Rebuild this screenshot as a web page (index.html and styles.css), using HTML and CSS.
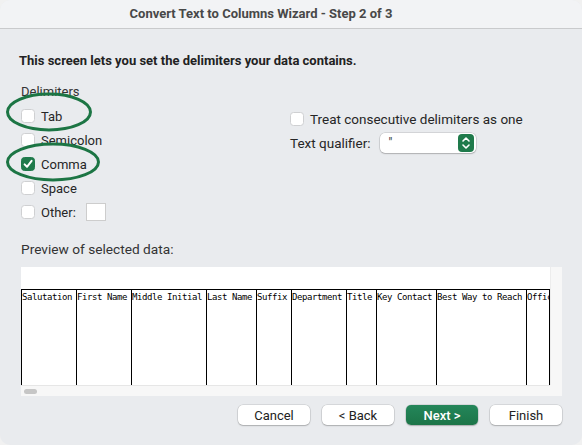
FILE: index.html
```html
<!DOCTYPE html>
<html>
<head>
<meta charset="utf-8">
<link rel="stylesheet" href="styles.css">
</head>
<body>
<div class="window">
  <div class="titlebar">Convert Text to Columns Wizard - Step 2 of 3</div>
  <div class="content">
    <div class="intro">This screen lets you set the delimiters your data contains.</div>
    <div class="options">
      <div class="delims">
        <div class="group-label">Delimiters</div>
        <div class="row"><span class="cb"></span><span>Tab</span></div>
        <div class="row"><span class="cb"></span><span>Semicolon</span></div>
        <div class="row"><span class="cb checked"><svg viewBox="0 0 14 14" width="14" height="14"><path d="M3.6 7.4 L6 9.8 L10.6 3.8" fill="none" stroke="#fff" stroke-width="2" stroke-linecap="round" stroke-linejoin="round"/></svg></span><span>Comma</span></div>
        <div class="row"><span class="cb"></span><span>Space</span></div>
        <div class="row"><span class="cb"></span><span>Other:</span><span class="other-input"></span></div>
      </div>
      <div class="right">
        <div class="row"><span class="cb"></span><span>Treat consecutive delimiters as one</span></div>
        <div class="row qual"><span>Text qualifier:</span>
          <span class="select"><span class="sel-text">"</span><span class="stepper"><svg viewBox="0 0 16 18" width="16" height="18"><path d="M5 7 L8 4 L11 7 M5 11 L8 14 L11 11" fill="none" stroke="#fff" stroke-width="1.6" stroke-linecap="round" stroke-linejoin="round"/></svg></span></span>
        </div>
      </div>
    </div>
    <div class="preview-label">Preview of selected data:</div>
    <div class="preview">
      <div class="sheet">
        <div class="cols">
          <div class="col w55">Salutation</div>
          <div class="col w55">First Name</div>
          <div class="col w75">Middle Initial</div>
          <div class="col w50">Last Name</div>
          <div class="col w35">Suffix</div>
          <div class="col w55">Department</div>
          <div class="col w30">Title</div>
          <div class="col w60">Key Contact</div>
          <div class="col w90">Best Way to Reach</div>
          <div class="col last">Office</div>
        </div>
      </div>
      <div class="vscroll"></div>
      <div class="hscroll"><span class="thumb"></span></div>
      <div class="corner"></div>
    </div>
    <div class="buttons">
      <button class="btn">Cancel</button>
      <button class="btn">&lt; Back</button>
      <button class="btn primary">Next &gt;</button>
      <button class="btn">Finish</button>
    </div>
  </div>
  <svg class="marks" width="582" height="445" viewBox="0 0 582 445">
    <ellipse cx="49" cy="112" rx="41.5" ry="18" fill="none" stroke="#1c7544" stroke-width="3"/>
    <ellipse cx="53" cy="162" rx="45.5" ry="18" fill="none" stroke="#1c7544" stroke-width="3"/>
  </svg>
</div>
</body>
</html>
```
FILE: styles.css
```css
* { box-sizing: border-box; }
html, body { margin: 0; padding: 0; }
body {
  width: 582px;
  height: 445px;
  background: #f1f1f1;
  font-family: "Roboto", "Liberation Sans", sans-serif;
  font-size: 13px;
  color: #262626;
  overflow: hidden;
}
.window {
  position: relative;
  width: 582px;
  height: 445px;
  background: #e9ebee;
  border-radius: 10px;
  overflow: hidden;
}
.titlebar {
  height: 29px;
  background: #f2f3f5;
  border-bottom: 1px solid #c9cacc;
  display: flex;
  align-items: center;
  justify-content: center;
  font-weight: 700;
  color: #484848;
  font-size: 13px;
  padding: 0 60px 1px 0;
}
.content {
  padding: 0 20px 0 21px;
  display: flex;
  flex-direction: column;
}
.intro {
  margin-top: 24px;
  line-height: 16px;
  font-weight: 700;
  color: #222;
  margin-left: -2px;
}
.options {
  display: flex;
  margin-top: 15px;
}
.delims { width: 269px; }
.group-label { line-height: 16px; color: #333; }
.row {
  display: flex;
  align-items: center;
  height: 24px;
  gap: 6px;
}
.delims .group-label + .row { margin-top: 4px; }
.cb {
  width: 14px;
  height: 14px;
  background: #fff;
  border: 1px solid #cfd0d2;
  border-radius: 3.5px;
  flex: none;
  display: inline-flex;
  align-items: center;
  justify-content: center;
}
.cb.checked {
  background: #1f7a4b;
  border-color: #1f7a4b;
}
.cb.checked svg { display: block; margin: -1px; }
.other-input {
  width: 20px;
  height: 18px;
  background: #fff;
  border: 1px solid #cdcdcd;
  margin-left: 4px;
}
.right { padding-top: 23px; font-size: 13.5px; }
.right .row { height: 24px; }
.right .row.qual { gap: 9px; }
.select {
  position: relative;
  width: 96px;
  height: 20px;
  background: #fff;
  border-radius: 5px;
  box-shadow: 0 0 0 0.5px rgba(0,0,0,0.18), 0 1px 1.5px rgba(0,0,0,0.18);
  display: flex;
  align-items: center;
  justify-content: space-between;
  padding: 0 2px 0 9px;
}
.sel-text { font-size: 12px; color: #333; }
.stepper {
  width: 16px;
  height: 18px;
  background: #1f7a4b;
  border-radius: 4px;
  display: flex;
}
.stepper svg { display: block; }
.preview-label {
  margin-top: 17px;
  line-height: 16px;
  font-size: 13.7px;
  color: #333;
}
.preview {
  margin-top: 10px;
  width: 541px;
  height: 129px;
  display: grid;
  grid-template-columns: 529px 12px;
  grid-template-rows: 118px 11px;
  background: #f6f6f6;
}
.sheet {
  background: #fff;
  padding-top: 22px;
  overflow: hidden;
}
.cols {
  display: flex;
  height: 96px;
  border-top: 1px solid #000;
  font-family: "DejaVu Sans Mono", "Liberation Mono", monospace;
  font-size: 9px;
  letter-spacing: -0.42px;
  line-height: 10px;
  color: #000;
}
.col {
  border-left: 1px solid #000;
  padding: 2px 0 0 0;
  white-space: nowrap;
  overflow: hidden;
  flex: none;
}
.w55 { width: 55px; }
.w75 { width: 75px; }
.w50 { width: 50px; }
.w35 { width: 35px; }
.w30 { width: 30px; }
.w60 { width: 60px; }
.w90 { width: 90px; }
.col.last { width: 24px; border-right: 1px solid #000; }
.vscroll { background: #f7f7f7; border-left: 1px solid #ececec; }
.hscroll {
  background: #f7f7f7;
  border-top: 1px solid #e6e6e6;
  display: flex;
  align-items: center;
  padding-left: 3px;
}
.thumb {
  width: 13px;
  height: 5px;
  background: #c6c6c6;
  border-radius: 3px;
}
.corner { background: #f7f7f7; }
.buttons {
  margin-top: 9px;
  display: flex;
  justify-content: flex-end;
  gap: 12px;
  padding-right: 0;
}
.btn {
  width: 72px;
  height: 20px;
  border: none;
  border-radius: 5px;
  background: #fff;
  box-shadow: 0 0 0 0.5px rgba(0,0,0,0.16), 0 1px 1.5px rgba(0,0,0,0.2);
  font-family: "Roboto", "Liberation Sans", sans-serif;
  font-size: 13px;
  color: #222;
  padding: 0;
}
.btn.primary {
  background: linear-gradient(#24865a, #1c7548);
  color: #fff;
  font-weight: 500;
}
.marks {
  position: absolute;
  left: 0;
  top: 0;
  pointer-events: none;
}
```
